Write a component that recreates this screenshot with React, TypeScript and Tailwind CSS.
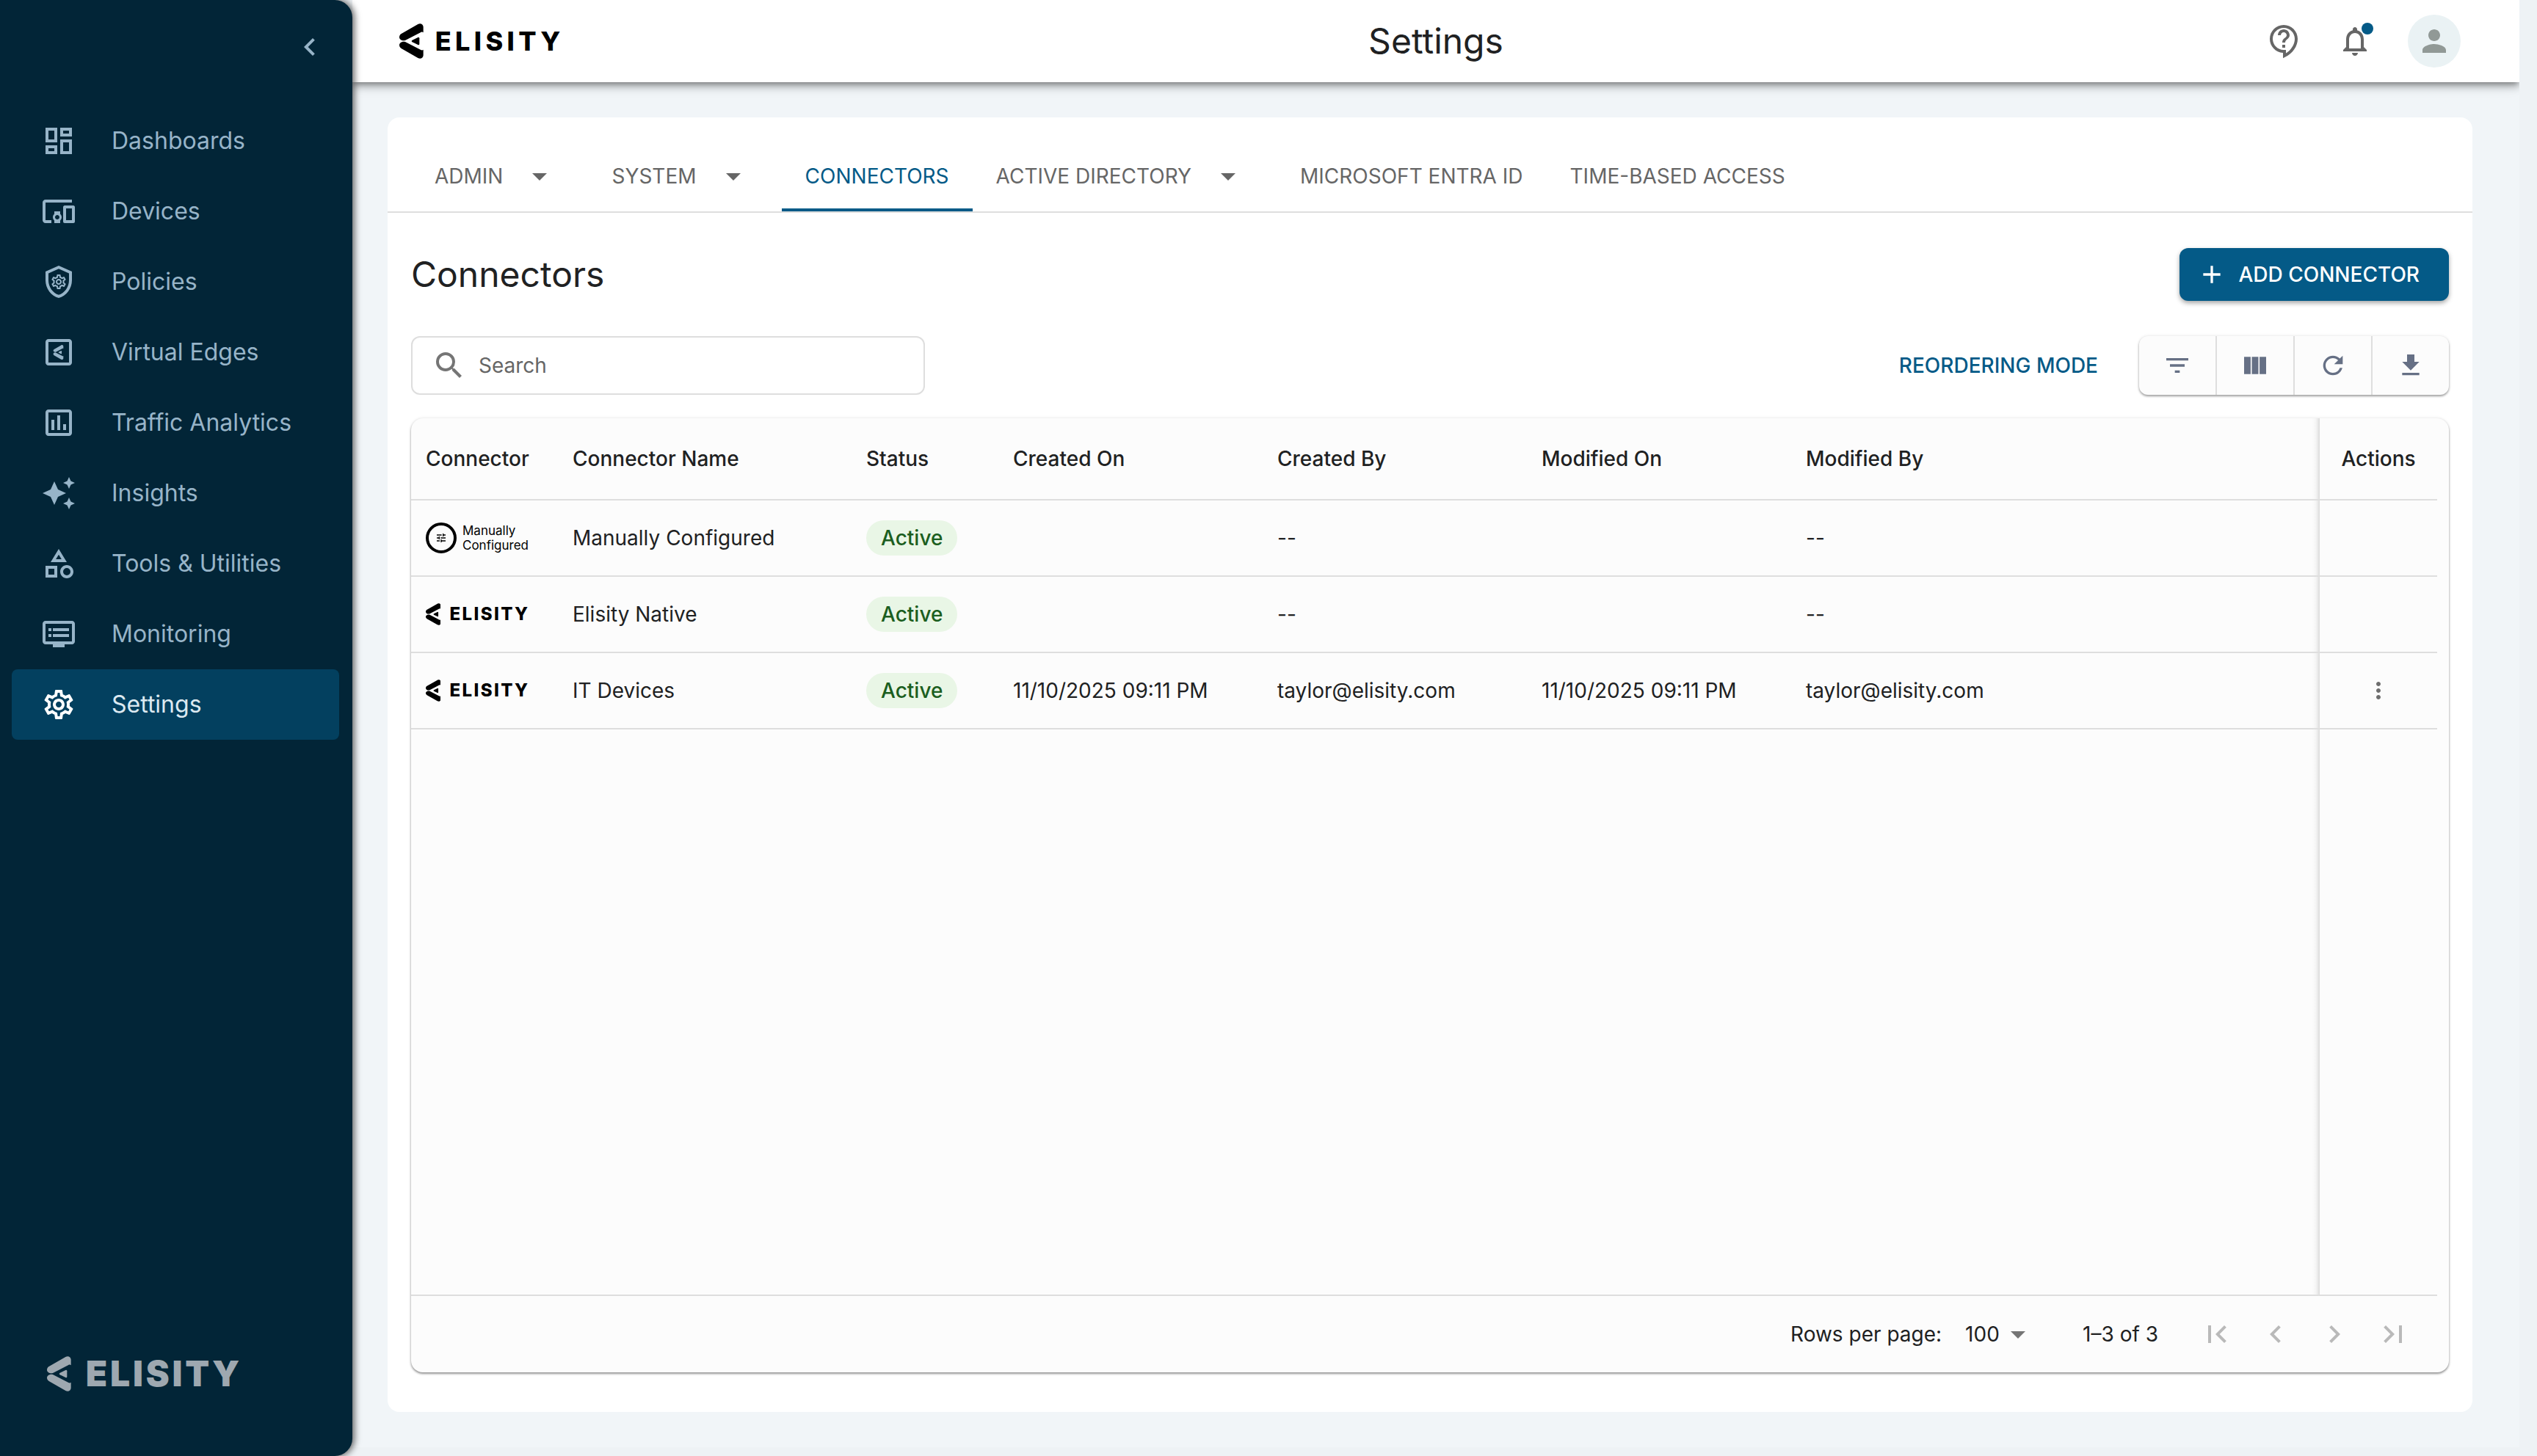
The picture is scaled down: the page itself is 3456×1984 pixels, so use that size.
import clsx from 'clsx';
import { useState } from 'react';
import {
  MdAdd,
  MdArrowDropDown,
  MdAutoAwesome,
  MdChevronLeft,
  MdChevronRight,
  MdFileDownload,
  MdFilterList,
  MdFirstPage,
  MdLastPage,
  MdMoreVert,
  MdNotificationsNone,
  MdOutlineAssessment,
  MdOutlineCategory,
  MdOutlineContactSupport,
  MdOutlineDashboard,
  MdOutlineDevicesOther,
  MdOutlineDvr,
  MdOutlineSettings,
  MdPerson,
  MdRefresh,
  MdSearch,
  MdTune,
  MdViewColumn,
} from 'react-icons/md';

const MARK_PATHS = [
  'M76 3C86-3 98 3 98 14V37C95 34 91 34 88 36L24 69C12 73 0 65 0 56 0 50 3 45 8 42Z',
  'M76 141C86 147 98 141 98 130V107C95 110 91 110 88 108L24 75C12 71 0 79 0 88 0 94 3 99 8 102Z',
  'M53 68L76 57Q82 55 82 61V83Q82 89 76 87L53 76Q47 72 53 68Z',
];

function ElisityMark({ className }: { className?: string }) {
  return (
    <svg viewBox="0 0 98 144" fill="currentColor" className={className}>
      {MARK_PATHS.map((d) => (
        <path key={d} d={d} />
      ))}
    </svg>
  );
}

function PoliciesIcon({ className }: { className?: string }) {
  return (
    <svg viewBox="0 0 24 24" fill="currentColor" className={className}>
      <path d="M12 1 3 5v6c0 5.55 3.84 10.74 9 12 5.16-1.26 9-6.45 9-12V5l-9-4zm7 10c0 4.52-2.98 8.69-7 9.93C7.98 19.69 5 15.52 5 11V6.3l7-3.12 7 3.12V11z" />
      <MdOutlineSettings x={6} y={6} size={12} />
    </svg>
  );
}

function VirtualEdgesIcon({ className }: { className?: string }) {
  return (
    <svg viewBox="0 0 24 24" fill="currentColor" className={className}>
      <path d="M19 3H5c-1.1 0-2 .9-2 2v14c0 1.1.9 2 2 2h14c1.1 0 2-.9 2-2V5c0-1.1-.9-2-2-2zm0 16H5V5h14v14z" />
      <g transform="translate(8.3 7) scale(.07)">
        {MARK_PATHS.map((d) => (
          <path key={d} d={d} />
        ))}
      </g>
    </svg>
  );
}

const navItems = [
  { name: 'Dashboards', icon: MdOutlineDashboard },
  { name: 'Devices', icon: MdOutlineDevicesOther },
  { name: 'Policies', icon: PoliciesIcon },
  { name: 'Virtual Edges', icon: VirtualEdgesIcon },
  { name: 'Traffic Analytics', icon: MdOutlineAssessment },
  { name: 'Insights', icon: MdAutoAwesome },
  { name: 'Tools & Utilities', icon: MdOutlineCategory },
  { name: 'Monitoring', icon: MdOutlineDvr },
  { name: 'Settings', icon: MdOutlineSettings, current: true },
];

const tabs = [
  { name: 'ADMIN', menu: true },
  { name: 'SYSTEM', menu: true },
  { name: 'CONNECTORS' },
  { name: 'ACTIVE DIRECTORY', menu: true },
  { name: 'MICROSOFT ENTRA ID' },
  { name: 'TIME-BASED ACCESS' },
];

const columns = [
  { name: 'Connector', width: 'w-[200px]' },
  { name: 'Connector Name', width: 'w-[400px]' },
  { name: 'Status', width: 'w-[200px]' },
  { name: 'Created On', width: 'w-[360px]' },
  { name: 'Created By', width: 'w-[360px]' },
  { name: 'Modified On', width: 'w-[360px]' },
];

const rows = [
  {
    name: 'Manually Configured',
    manual: true,
    createdOn: '',
    createdBy: '--',
    modifiedOn: '',
    modifiedBy: '--',
  },
  {
    name: 'Elisity Native',
    createdOn: '',
    createdBy: '--',
    modifiedOn: '',
    modifiedBy: '--',
  },
  {
    name: 'IT Devices',
    createdOn: '11/10/2025 09:11 PM',
    createdBy: 'taylor@elisity.com',
    modifiedOn: '11/10/2025 09:11 PM',
    modifiedBy: 'taylor@elisity.com',
    editable: true,
  },
];

const tools = [
  { name: 'Filter', icon: MdFilterList },
  { name: 'Columns', icon: MdViewColumn },
  { name: 'Refresh', icon: MdRefresh },
  { name: 'Download', icon: MdFileDownload },
];

const pagers = [
  { name: 'First page', icon: MdFirstPage },
  { name: 'Previous page', icon: MdChevronLeft },
  { name: 'Next page', icon: MdChevronRight },
  { name: 'Last page', icon: MdLastPage },
];

// soft edge that the pinned Actions column casts on the cells to its left
const pinnedEdge =
  'bg-[linear-gradient(to_left,rgba(0,0,0,0.13),rgba(0,0,0,0.03)_50%,transparent)] bg-[length:10px_100%] bg-right bg-no-repeat';

const cell = 'border-b-2 border-[#dedede] px-5 text-left';

function Sidebar() {
  return (
    <aside className="z-20 flex w-[480px] shrink-0 flex-col rounded-r-3xl bg-[#022537] pb-22 shadow-[2px_0_10px_1px_rgba(0,0,0,0.6)]">
      <div className="mb-14 flex justify-end pt-10 pr-[34px]">
        <button aria-label="Collapse menu" className="text-[#97b4c8]">
          <MdChevronLeft className="size-12" />
        </button>
      </div>
      <nav className="pr-[18px] pl-4">
        <ul>
          {navItems.map((item) => (
            <li key={item.name}>
              <a
                href="#"
                className={clsx(
                  'flex h-24 items-center gap-12 rounded-lg pl-10 text-[32px]',
                  item.current
                    ? 'bg-[#03405f] text-white'
                    : 'text-[#97b4c8] hover:text-white'
                )}
              >
                <item.icon className="size-12" />
                <span className={clsx(item.current && 'text-[#dce9f1]')}>
                  {item.name}
                </span>
              </a>
            </li>
          ))}
        </ul>
      </nav>
      <div className="mt-auto flex items-center gap-5 pl-16 text-[#9ea8b0]">
        <ElisityMark className="h-12" />
        <span className="text-5xl leading-12 font-black tracking-[0.08em]">
          ELISITY
        </span>
      </div>
    </aside>
  );
}

function Header() {
  return (
    <header className="z-10 grid h-28 grid-cols-[1fr_auto_1fr] items-center bg-white shadow-[0_4px_8px_-2px_rgba(0,0,0,0.4),0_8px_10px_0_rgba(0,0,0,0.14),0_2px_20px_0_rgba(0,0,0,0.12)]">
      <div className="flex items-center gap-4 pl-16 text-black">
        <ElisityMark className="h-12" />
        <span className="text-4xl font-extrabold tracking-[0.15em]">
          ELISITY
        </span>
      </div>
      <h1 className="text-5xl">Settings</h1>
      <div className="flex items-center justify-end gap-12 pr-20 text-[#666666]">
        <button aria-label="Help">
          <MdOutlineContactSupport className="size-12" />
        </button>
        <button aria-label="Notifications" className="relative">
          <MdNotificationsNone className="size-12" />
          <span className="absolute -top-px -right-px size-4 rounded-full bg-[#045a87]"></span>
        </button>
        <button
          aria-label="Account"
          className="flex size-18 items-center justify-center rounded-full bg-[#eaf2f4]"
        >
          <MdPerson className="size-12 text-[#919996]" />
        </button>
      </div>
    </header>
  );
}

function ConnectorLogo({ manual }: { manual?: boolean }) {
  if (manual) {
    return (
      <div className="flex items-center gap-2 text-black">
        <span className="flex size-[42px] items-center justify-center rounded-full border-4 border-black">
          <MdTune className="size-4" />
        </span>
        <span className="text-[17px] leading-5">
          Manually
          <br />
          Configured
        </span>
      </div>
    );
  }
  return (
    <div className="flex items-center gap-3 text-black">
      <ElisityMark className="h-[30px]" />
      <span className="text-2xl font-extrabold tracking-widest">ELISITY</span>
    </div>
  );
}

function ConnectorsTable() {
  return (
    <div className="grid flex-1 pr-4">
      <table className="w-full table-fixed border-separate border-spacing-0">
        <thead>
          <tr>
            {columns.map((column) => (
              <th
                key={column.name}
                className={clsx(cell, 'h-28 font-medium', column.width)}
              >
                {column.name}
              </th>
            ))}
            <th className={clsx(cell, pinnedEdge, 'font-medium')}>
              Modified By
            </th>
            <th className="w-40 border-b-2 border-[#dedede] text-center font-medium">
              Actions
            </th>
          </tr>
        </thead>
        <tbody>
          {rows.map((row) => (
            <tr key={row.name}>
              <td className={clsx(cell, 'h-26')}>
                <ConnectorLogo manual={row.manual} />
              </td>
              <td className={cell}>{row.name}</td>
              <td className={cell}>
                <span className="inline-flex h-12 items-center rounded-full bg-[#e9f6e6] px-5 font-medium text-[#1b5e20]">
                  Active
                </span>
              </td>
              <td className={cell}>{row.createdOn}</td>
              <td className={cell}>{row.createdBy}</td>
              <td className={cell}>{row.modifiedOn}</td>
              <td className={clsx(cell, pinnedEdge)}>{row.modifiedBy}</td>
              <td className="border-b-2 border-[#dedede] text-center">
                {row.editable && (
                  <button
                    aria-label="Row actions"
                    className="block w-full text-[#6e6e6e]"
                  >
                    <MdMoreVert className="mx-auto size-9" />
                  </button>
                )}
              </td>
            </tr>
          ))}
          <tr>
            <td colSpan={7} className={pinnedEdge}></td>
            <td></td>
          </tr>
        </tbody>
      </table>
    </div>
  );
}

function Pagination() {
  return (
    <div className="flex h-26 items-center justify-end pr-9">
      <label htmlFor="rows-per-page" className="pr-8">
        Rows per page:
      </label>
      <div className="relative mr-16">
        <select
          id="rows-per-page"
          defaultValue="100"
          className="w-24 appearance-none bg-transparent"
        >
          <option value="100">100</option>
        </select>
        <MdArrowDropDown className="pointer-events-none absolute inset-y-0 right-0 my-auto size-12 text-[#757575]" />
      </div>
      <span className="pr-10">1–3 of 3</span>
      {pagers.map((pager) => (
        <button
          key={pager.name}
          aria-label={pager.name}
          disabled
          className="flex size-20 items-center justify-center text-[#b9b9b9]"
        >
          <pager.icon className="size-12" />
        </button>
      ))}
    </div>
  );
}

export default function App() {
  const [activeTab, setActiveTab] = useState('CONNECTORS');
  const [search, setSearch] = useState('');

  return (
    <div className="flex min-h-screen bg-[#eef2f5] pr-6 font-[Inter,sans-serif] text-[28px] leading-10 text-[#202122]">
      <Sidebar />
      <div className="mb-3 flex min-w-0 flex-1 flex-col overflow-x-clip">
        <Header />
        <main className="flex flex-1 flex-col bg-[#f1f5f8] py-12 pr-16 pl-12">
          <section className="flex flex-1 flex-col rounded-2xl bg-white">
            <div
              role="tablist"
              className="flex border-b-2 border-[#dedede] px-8 pt-8"
            >
              {tabs.map((tab) => (
                <button
                  key={tab.name}
                  role="tab"
                  aria-selected={tab.name === activeTab}
                  onClick={() => setActiveTab(tab.name)}
                  className={clsx(
                    'flex h-24 items-center border-y-4 border-t-transparent px-8',
                    tab.name === activeTab
                      ? 'border-b-[#045a87] text-[#045a87]'
                      : 'border-b-transparent text-[#666666]'
                  )}
                >
                  {tab.name}
                  {tab.menu && (
                    <MdArrowDropDown className="mr-2.5 ml-[26px] size-12" />
                  )}
                </button>
              ))}
            </div>

            <div className="flex flex-1 flex-col px-8 pt-12 pb-[54px]">
              <div className="flex items-center justify-between">
                <h2 className="text-5xl">Connectors</h2>
                <button className="flex h-18 items-center gap-4 rounded-xl bg-[#045a87] pr-10 pl-6 font-medium text-white shadow-[0_3px_6px_rgba(0,0,0,0.35)]">
                  <MdAdd className="size-10" />
                  ADD CONNECTOR
                </button>
              </div>

              <div className="mt-12 flex items-center justify-between">
                <div className="flex h-20 w-[700px] items-center gap-4 rounded-xl border-2 border-[#dedede] pl-[26px]">
                  <MdSearch className="size-12 text-[#757575]" />
                  <input
                    type="text"
                    aria-label="Search"
                    placeholder="Search"
                    value={search}
                    onChange={(e) => setSearch(e.target.value)}
                    className="flex-1 outline-none placeholder:text-[#666666]"
                  />
                </div>
                <div className="flex items-center gap-14">
                  <button className="font-medium text-[#045a87]">
                    REORDERING MODE
                  </button>
                  <div className="flex h-20 divide-x-2 divide-[#dedede] rounded-xl bg-[#fcfcfc] text-[#667085] shadow-[0_2px_3px_rgba(0,0,0,0.35),0_0_4px_rgba(0,0,0,0.1)]">
                    {tools.map((tool) => (
                      <button
                        key={tool.name}
                        aria-label={tool.name}
                        className="box-content flex w-[104px] items-center justify-center"
                      >
                        <tool.icon className="size-10" />
                      </button>
                    ))}
                  </div>
                </div>
              </div>

              <div className="mt-8 flex flex-1 flex-col rounded-2xl bg-[#fcfcfc] shadow-[0_2px_3px_rgba(0,0,0,0.4),0_0_4px_rgba(0,0,0,0.1)]">
                <ConnectorsTable />
                <div className="mr-4 border-t-2 border-[#dedede]"></div>
                <Pagination />
              </div>
            </div>
          </section>
        </main>
      </div>
    </div>
  );
}
